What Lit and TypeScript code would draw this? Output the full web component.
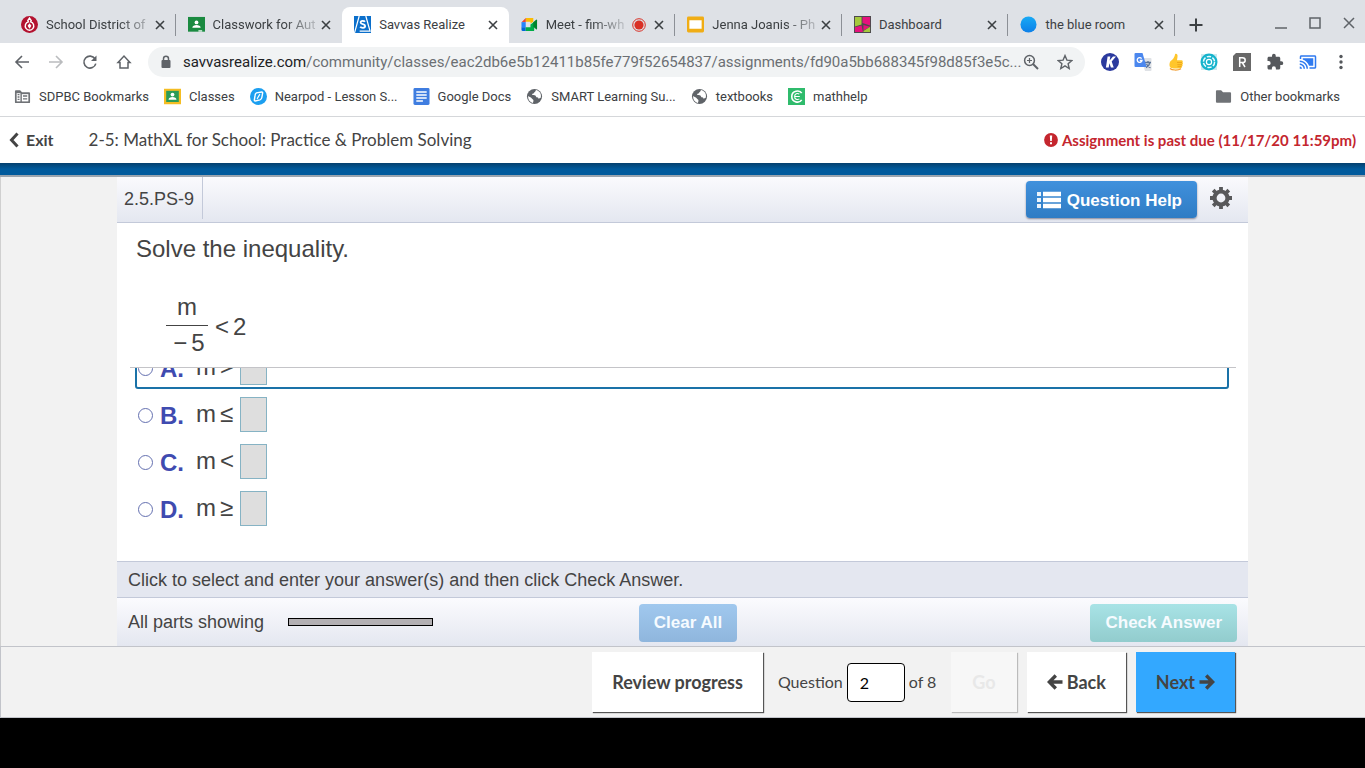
import { LitElement, html, css, svg, nothing } from "lit";
import { customElement, property, state } from "lit/decorators.js";
import { classMap } from "lit/directives/class-map.js";

const glyphs: Record<string, { box: string; body: unknown }> = {
  district: {
    box: "0 0 18 18",
    body: svg`<circle cx="9" cy="9" r="9" fill="#b3122f"/><path d="M9 2.200l1.800 2.600-.6 1.400a4.500 4.500 0 1 1-2.400 0l-.6-1.400z" fill="none" stroke="#fff" stroke-width="1.500"/><path d="M9 7.600l2 2.800-2 3.200-2-3.200z" fill="#fff"/>`,
  },
  classroom: {
    box: "0 0 18 18",
    body: svg`<path d="M0 1h18v15.600H0z" fill="#1a8a40"/><circle cx="9" cy="6.800" r="2" fill="#fff"/><path d="M4.600 12.400c0-2.200 2.200-3 4.400-3s4.400.8 4.400 3z" fill="#fff"/><path d="M11 15h4v1.600h-4z" fill="#d8efe0"/>`,
  },
  savvas: {
    box: "0 0 18 18",
    body: svg`<path d="M0 0h18v18H0z" fill="#0b6fcb"/><path d="M5.500 0L.5 18M12.500 0L17 16H6" fill="none" stroke="#fff" stroke-width="1.300"/><path d="M11.600 6.200C10.800 5 7 4.600 7 6.900c0 2.400 4.800 1.200 4.800 3.800 0 2.500-4.200 2.200-5.200.7" fill="none" stroke="#fff" stroke-width="1.900"/>`,
  },
  meet: {
    box: "0 0 18 18",
    body: svg`<path d="M5 2h8v4l-3 2V6H5z" fill="#fbbc04"/><path d="M5 2v4.500H.5z" fill="#ea4335"/><path d="M.5 6.500H5V12H.5z" fill="#2684fc"/><path d="M.5 12H5v4H2Q.5 16 .5 14.500z" fill="#0066da"/><path d="M5 12h5V9l4-3v9q0 1-1 1H5z" fill="#00ac47"/><path d="M13 6.500l3-2.500q1-.6 1 .6v9q0 1-1 .4l-3-2.500z" fill="#00832d"/>`,
  },
  record: {
    box: "0 0 14 14",
    body: svg`<circle cx="7" cy="7" r="6.300" fill="none" stroke="#d93025" stroke-width="1"/><circle cx="7" cy="7" r="4.600" fill="#d93025"/>`,
  },
  slides: {
    box: "0 0 18 18",
    body: svg`<rect y="0.500" width="18" height="17" rx="1.500" fill="#f0ad15"/><path d="M2.500 4.500h13v9h-13z" fill="#fff"/>`,
  },
  dashboard: {
    box: "0 0 18 18",
    body: svg`<path d="M0 0h18v18H0z" fill="#4c4a4d"/><path d="M1 1h7v8L1 11z" fill="#a5c83c"/><path d="M9 1h8v9L9 7.500z" fill="#e5127d"/><path d="M1 12l7-2 1.500 7H1z" fill="#e5127d"/><path d="M10 9.500l7 1.800-7 4z" fill="#e5127d"/><path d="M10 16l7-4.500V17h-7z" fill="#a5c83c"/>`,
  },
  blue: {
    box: "0 0 18 18",
    body: svg`<defs><linearGradient id="sky" x2="0" y2="1"><stop stop-color="#19aaf5"/><stop offset="1" stop-color="#0c7fe8"/></linearGradient></defs><circle cx="9" cy="9" r="8.500" fill="url(#sky)"/>`,
  },
  close: { box: "0 0 10 10", body: svg`<path d="M1 1l8 8M9 1L1 9" stroke="#3c4043" stroke-width="1.600"/>` },
  plus: { box: "0 0 14 14", body: svg`<path d="M7 .5v13M.5 7h13" stroke="#3c4043" stroke-width="2"/>` },
  minimize: { box: "0 0 12 12", body: svg`<path d="M0 11h12" stroke="#5f6368" stroke-width="1.500"/>` },
  maximize: { box: "0 0 12 12", body: svg`<path d="M1 1h10v10H1z" fill="none" stroke="#5f6368" stroke-width="1.500"/>` },
  shut: { box: "0 0 12 12", body: svg`<path d="M1 1l10 10M11 1L1 11" stroke="#5f6368" stroke-width="1.500"/>` },
  back: { box: "0 0 16 16", body: svg`<path d="M15 8H2M8 2L2 8l6 6" fill="none" stroke="#5f6368" stroke-width="1.600"/>` },
  forward: { box: "0 0 16 16", body: svg`<path d="M1 8h13M8 2l6 6-6 6" fill="none" stroke="#babcbe" stroke-width="1.600"/>` },
  reload: { box: "0 0 16 16", body: svg`<path d="M13 4.800A6 6 0 1 0 13.800 9.600" fill="none" stroke="#5f6368" stroke-width="1.600"/><path d="M14.500 1.500V7H9z" fill="#5f6368"/>` },
  home: { box: "0 0 16 16", body: svg`<path d="M2 8.500L8 2l6 6.500h-2V14H4V8.500z" fill="none" stroke="#5f6368" stroke-width="1.500"/>` },
  lock: { box: "0 0 12 14", body: svg`<rect x="1.500" y="5" width="9" height="8" rx="1" fill="#5f6368"/><path d="M3.500 6V3.800a2.500 2.500 0 0 1 5 0V6" fill="none" stroke="#5f6368" stroke-width="1.500"/>` },
  zoomIn: { box: "0 0 16 16", body: svg`<circle cx="6.500" cy="6.500" r="4.900" fill="none" stroke="#5f6368" stroke-width="1.500"/><path d="M10 10l5 5" stroke="#5f6368" stroke-width="1.900"/><path d="M6.500 4v5M4 6.500h5" stroke="#5f6368" stroke-width="1.200"/>` },
  star: { box: "0 0 16 16", body: svg`<path d="M8 1.600l1.900 4.500 4.900.4-3.700 3.200 1.100 4.800L8 11.900l-4.200 2.600 1.100-4.800L1.200 6.500l4.900-.4z" fill="none" stroke="#5f6368" stroke-width="1.400"/>` },
  kami: { box: "0 0 18 18", body: svg`<circle cx="9" cy="9" r="9" fill="#2b3a9e"/><path d="M6.600 3.500h2.700l-.7 4L12 3.500h3L10.700 8.600l2 5.900H9.900L8.400 10.300l-.7 4.200H4.900z" fill="#fff"/>` },
  translate: { box: "0 0 18 18", body: svg`<path d="M7 5h9.500q1 0 1 1v11q0 1-1 1H11z" fill="#dfe2e6"/><path d="M10.500 9.500h6.500M14 8v1.500M16 9.500c-.6 2.500-2.500 4.500-4 5.200M12.500 11c1 2 2.500 3.200 4 3.700" fill="none" stroke="#5b7396" stroke-width="1.300"/><path d="M1.500 0H8.500l4.200 14H1.500Q.5 14 .5 13V1q0-1 1-1z" fill="#4b87ee"/><path d="M7.600 5.600A2.400 2.400 0 1 0 8 7.500H5.800" fill="none" stroke="#fff" stroke-width="1.300"/>` },
  thumb: { box: "0 0 18 18", body: svg`<path d="M8.200 1c1.800-.6 2.700 1 2.300 2.900L10 7.200h4.500c1.500 0 1.600 1.700.9 2.100.9.600.7 1.900-.1 2.200.6.800.200 1.800-.6 2 .4 1-.3 1.900-1.300 1.900H8c-1.700 0-3.400-.3-4.600-1-1.400-1.500-1-5.400.3-6.500C6 6.800 7.500 4 8.200 1z" fill="#ffc62b"/><path d="M10 9.500h5M10.300 11.700h4.700M10.500 13.600h4" stroke="#e79a14" stroke-width=".7"/><path d="M3 15.500c2 2 8 2 11 .2" stroke="#f19a2a" fill="none" stroke-width="1.200"/>` },
  wheel: { box: "0 0 18 18", body: svg`<path d="M1 1h16v16H1z" fill="#cde9ee"/><circle cx="9" cy="9" r="8.500" fill="#15b3cc"/><circle cx="9" cy="9" r="5.600" fill="none" stroke="#e8fbff" stroke-width="1.500" stroke-dasharray="4.400 1.460"/><circle cx="9" cy="9" r="2.600" fill="none" stroke="#fff" stroke-width="1.200"/>` },
  rbox: { box: "0 0 18 18", body: svg`<path d="M3 0h15v18H0V3z" fill="#686868"/><path d="M6.700 14V4.700h2.800c3.600 0 3.600 4.900 0 4.900H6.700M9.300 9.600L12 14" fill="none" stroke="#fff" stroke-width="1.500"/>` },
  puzzle: { box: "0 0 24 24", body: svg`<path d="M20.500 11H19V7c0-1.100-.9-2-2-2h-4V3.500a2.500 2.500 0 0 0-5 0V5H4c-1.100 0-2 .9-2 2v3.800h1.500a2.700 2.700 0 0 1 0 5.400H2V20c0 1.100.9 2 2 2h3.800v-1.500a2.700 2.700 0 0 1 5.400 0V22H17c1.100 0 2-.9 2-2v-4h1.500a2.500 2.500 0 0 0 0-5z" fill="#55585c"/>` },
  cast: { box: "0 0 24 24", body: svg`<path d="M1 18v3h3c0-1.660-1.340-3-3-3zm0-4v2c2.760 0 5 2.240 5 5h2c0-3.870-3.130-7-7-7zm0-4v2c4.970 0 9 4.030 9 9h2c0-6.080-4.930-11-11-11zM21 3H3c-1.100 0-2 .9-2 2v3h2V5h18v14h-7v2h7c1.100 0 2-.9 2-2V5c0-1.100-.9-2-2-2z" fill="#2f7af0"/><path d="M5 7v1.600c4 1.300 7.100 4.400 8.400 8.400H19V7z" fill="#2f7af0"/>` },
  dots: { box: "0 0 18 18", body: svg`<circle cx="9" cy="3.500" r="1.700" fill="#55585c"/><circle cx="9" cy="9" r="1.700" fill="#55585c"/><circle cx="9" cy="14.500" r="1.700" fill="#55585c"/>` },
  managed: { box: "0 0 18 18", body: svg`<path d="M1 3.500q0-1 1-1h4.500l2 2H16q1 0 1 1V15q0 1-1 1H2q-1 0-1-1z" fill="#6f7276"/><path d="M2.800 5.500h4v8.700h-4z" fill="#fff"/><path d="M8.300 6.500h6.900v7.700H8.300z" fill="#fff"/><path d="M3.800 7h2M3.800 9.500h2M3.800 12h2M9.500 8.500h4.500M9.500 11.500h4.500" stroke="#6f7276" stroke-width="1.400"/>` },
  classes: { box: "0 0 18 18", body: svg`<path d="M0 .8h18v16.400H0z" fill="#f4bd23"/><path d="M2.300 3h13.400v11.800H2.300z" fill="#2b9b57"/><circle cx="9" cy="7" r="2" fill="#fff"/><path d="M4.800 12.500c0-2 2-3 4.200-3s4.200 1 4.200 3z" fill="#fff"/>` },
  nearpod: { box: "0 0 18 18", body: svg`<circle cx="9" cy="9" r="9" fill="#1c9ff0"/><path d="M6.800 5.200l5.700-.9q1-.1.900.8l-.8 4.700q-.3 2.300-2 2.800l-5 1.100q-1.100.1-1-.9l.7-4.700q.2-2.300 1.500-2.900z" fill="none" stroke="#fff" stroke-width="1.500"/><path d="M7.500 11.500l3-5" stroke="#fff" stroke-width="1.200"/>` },
  docs: { box: "0 0 18 18", body: svg`<rect y="0" x=".5" width="17" height="18" rx="1.500" fill="#3f7de0"/><path d="M3.500 4.200h11M3.500 7.400h11M3.500 10.600h11M3.500 13.800h7" stroke="#fff" stroke-width="1.700"/>` },
  globe: { box: "0 0 18 18", body: svg`<circle cx="9" cy="9" r="8" fill="#5f6368"/><path d="M10.800 2.200c-1 .8-.6 1.800-1.900 2.300-.6 1.900-2.600 1-2.300 2.900 2 .2 3.400-.3 4 1.500.6 1.400 2.600.3 2.700 2.400l2.300-1c1-3.500-.8-7-4.800-8.100zM2.300 8.600c1.600 1.500 3.300 1 3.900 2.600.5 1 2 1 1.700 2.600l-.6 2C4 15 2 12.300 2.300 8.600z" fill="#fff"/>` },
  mathhelp: { box: "0 0 18 18", body: svg`<path d="M0 0h18v18H0z" fill="#2fbb6c"/><path d="M14.500 5.500C12.500 1.800 4 2.500 4 9s8 7.500 10.500 3.500" fill="none" stroke="#fff" stroke-width="1.700"/><path d="M12 6.500C10 5 7 6 7 9s3 4 5 2.500M7.500 9h5" fill="none" stroke="#fff" stroke-width="1.200"/>` },
  folder: { box: "0 0 18 18", body: svg`<path d="M1 3.500q0-1 1-1h4.500l2 2H16q1 0 1 1v9q0 1-1 1H2q-1 0-1-1z" fill="#6f7276"/>` },
  chevron: { box: "0 0 10 16", body: svg`<path d="M8.500 1.500L2.500 8l6 6.500" fill="none" stroke="#444" stroke-width="3"/>` },
  alert: { box: "0 0 14 14", body: svg`<circle cx="7" cy="7" r="6.900" fill="#c4262e"/><path d="M5.800 2.600h2.400L7.800 8H6.200zM6 9.200h2v2H6z" fill="#fff"/>` },
  list: { box: "0 0 26 18", body: svg`<path d="M7 3h18M7 9h18M7 15h18" stroke="#fff" stroke-width="4.600"/><path d="M1 3h4M1 9h4M1 15h4" stroke="#fff" stroke-width="4" opacity=".9"/>` },
  gear: { box: "0 0 24 24", body: svg`<circle cx="12" cy="12" r="6.500" fill="none" stroke="#58585a" stroke-width="4.200"/><path d="M12 1v4M12 19v4M1 12h4M19 12h4M4.200 4.200l2.800 2.800M17 17l2.800 2.800M4.200 19.800l2.800-2.800M17 7l2.800-2.800" stroke="#58585a" stroke-width="3.800"/>` },
  arrowLeft: { box: "0 0 16 16", body: svg`<path d="M15.500 8H3M8.800 1.500L2.300 8l6.500 6.500" fill="none" stroke="#444" stroke-width="3.400"/>` },
  arrowRight: { box: "0 0 16 16", body: svg`<path d="M.5 8H13M7.200 1.500L13.700 8l-6.500 6.500" fill="none" stroke="#444" stroke-width="3.400"/>` },
};

const icon = (name: string, cls = "i18") =>
  svg`<svg class=${"icon " + cls} viewBox=${glyphs[name].box} aria-hidden="true">${glyphs[name].body}</svg>`;

const shared = css`
  *, *::before, *::after { box-sizing: border-box; }
  button, input { font: inherit; color: inherit; margin: 0; }
  button { border: 0; background: none; padding: 0; display: inline-flex; align-items: center; justify-content: center; cursor: pointer; white-space: nowrap; }
  a { color: inherit; text-decoration: none; }
  .icon { display: block; flex: none; }
  .i10 { width: 10px; height: 10px; }
  .i12 { width: 12px; height: 12px; }
  .i14 { width: 14px; height: 14px; }
  .i16 { width: 16px; height: 16px; }
  .i17 { width: 17px; height: 17px; }
  .i18 { width: 18px; height: 18px; }
  .i24 { width: 24px; height: 24px; }
`;

interface Tab { icon: string; title: string; active?: boolean; recording?: boolean }

const tabs: Tab[] = [
  { icon: "district", title: "School District of" },
  { icon: "classroom", title: "Classwork for Aut" },
  { icon: "savvas", title: "Savvas Realize", active: true },
  { icon: "meet", title: "Meet - fim-wh", recording: true },
  { icon: "slides", title: "Jenna Joanis - Ph" },
  { icon: "dashboard", title: "Dashboard" },
  { icon: "blue", title: "the blue room" },
];

const bookmarks = [
  ["managed", "SDPBC Bookmarks"],
  ["classes", "Classes"],
  ["nearpod", "Nearpod - Lesson S..."],
  ["docs", "Google Docs"],
  ["globe", "SMART Learning Su..."],
  ["globe", "textbooks"],
  ["mathhelp", "mathhelp"],
];

const extensions = [
  ["kami", "Kami"], ["translate", "Translate"], ["thumb", "Thumbs up"], ["wheel", "Wheel"],
  ["rbox", "Reader"], ["puzzle", "Extensions"], ["cast", "Cast"], ["dots", "Menu"],
];

@customElement("browser-chrome")
export class BrowserChrome extends LitElement {
  static styles = [shared, css`
    :host { display: block; font: 13px/18px Roboto, sans-serif; color: #3c4043; background: #fff; border-bottom: 1px solid #d5d7da; }
    .strip { display: flex; background: #dee1e6; height: 43px; padding: 7px 0 0 9px; }
    .tabs { display: flex; flex: 1; min-width: 0; }
    .tab { flex: 1 1 0; min-width: 0; display: flex; align-items: center; gap: 8px; padding: 0 10px 1px 12px; border-right: 1px solid #8c9096; border-image: linear-gradient(transparent 20%, #8c9096 20%, #8c9096 80%, transparent 80%) 1; }
    .tab.plain { border-color: transparent; border-image: none; }
    .tab.active { background: #fff; border-radius: 8px 8px 0 0; }
    .title { flex: 1; min-width: 0; overflow: hidden; white-space: nowrap; text-align: left; justify-content: flex-start; }
    .fade { mask-image: linear-gradient(to right, #000 calc(100% - 32px), rgba(0, 0, 0, 0.2)); margin-right: -4px; }
    .recording .fade { margin-right: 0; }
    .window { display: flex; width: 190px; padding: 0 10px 0 14px; justify-content: space-between; }
    .controls { display: flex; gap: 22px; padding-bottom: 5px; }
    .toolbar { display: flex; align-items: center; padding: 4px 15px 0 14px; }
    .nav { display: flex; gap: 18px; padding-right: 16px; }
    .omni { flex: 1; min-width: 0; display: flex; align-items: center; height: 30px; border-radius: 15px; background: #f1f3f4; padding: 0 12px; gap: 18px; }
    .address { flex: 1; min-width: 0; display: flex; align-items: center; gap: 11px; margin-right: -16px; }
    .lock { width: 12px; height: 14px; }
    .url { flex: 1; min-width: 0; overflow: hidden; white-space: nowrap; font-size: 15px; color: #6b6f73; }
    .host { color: #202124; }
    .ext { display: flex; gap: 15px; padding-left: 16px; }
    .ext button { width: 18px; }
    .bookmarks { display: flex; align-items: center; gap: 15px; height: 39px; padding: 0 25px 0 14px; }
    .mark { display: flex; align-items: center; gap: 8px; white-space: nowrap; }
    .other { margin-left: auto; }
  `];

  render() {
    return html`
      <div class="strip">
        <div class="tabs" role="tablist">
          ${tabs.map((t, i) => html`
            <div class=${classMap({ tab: true, active: !!t.active, recording: !!t.recording, plain: !!t.active || !!tabs[i + 1]?.active })}>
              ${icon(t.icon, "i17")}
              <button role="tab" aria-selected=${t.active ? "true" : "false"} class=${classMap({ title: true, fade: !!t.recording || t.title.length > 14 })}>${t.title}</button>
              ${t.recording ? icon("record", "i14") : nothing}
              <button aria-label="Close tab">${icon("close", "i10")}</button>
            </div>`)}
        </div>
        <div class="window">
          <button aria-label="New tab">${icon("plus", "i14")}</button>
          <div class="controls">
            <button aria-label="Minimize">${icon("minimize", "i12")}</button>
            <button aria-label="Maximize">${icon("maximize", "i12")}</button>
            <button aria-label="Close">${icon("shut", "i12")}</button>
          </div>
        </div>
      </div>
      <div class="toolbar">
        <div class="nav">
          <button aria-label="Back">${icon("back", "i16")}</button>
          <button aria-label="Forward">${icon("forward", "i16")}</button>
          <button aria-label="Reload">${icon("reload", "i16")}</button>
          <button aria-label="Home">${icon("home", "i16")}</button>
        </div>
        <div class="omni">
          <div class="address">
            ${icon("lock", "lock")}
            <div class="url"><span class="host">savvasrealize.com</span>/community/classes/eac2db6e5b12411b85fe779f52654837/assignments/fd90a5bb688345f98d85f3e5c...</div>
          </div>
          <button aria-label="Zoom">${icon("zoomIn", "i16")}</button>
          <button aria-label="Bookmark">${icon("star", "i16")}</button>
        </div>
        <div class="ext">${extensions.map(([g, label]) => html`<button aria-label=${label}>${icon(g)}</button>`)}</div>
      </div>
      <nav class="bookmarks">
        ${bookmarks.map(([g, label]) => html`<a class="mark" href="#">${icon(g, "i17")}${label}</a>`)}
        <a class="mark other" href="#">${icon("folder", "i17")}Other bookmarks</a>
      </nav>`;
  }
}

@customElement("exercise-panel")
export class ExercisePanel extends LitElement {
  @state() private focused = "A";

  static styles = [shared, css`
    :host { display: block; background: #fff; font: 18px/24px "Liberation Sans", Arial, sans-serif; color: #444; }
    .head { display: flex; align-items: center; height: 46px; background: linear-gradient(#fafafd, #e4e7f0); border-bottom: 1px solid #c3c9d9; padding-right: 15px; }
    .id { align-self: stretch; display: flex; align-items: center; padding: 2px 8px 0 7px; margin-bottom: 3px; border-right: 1px solid #c3c9d9; }
    .help { margin-left: auto; gap: 5px; height: 37px; padding: 2px 15px 0 10px; border-radius: 4px; background: linear-gradient(#4090dc, #2f7cc4); box-shadow: 0 1px 2px #889; color: #fff; font-size: 17px; font-weight: bold; }
    .list { width: 26px; height: 18px; margin-bottom: 2px; }
    .settings { margin: 0 0 4px 12px; }
    .question { height: 144px; padding: 10px 19px; font-size: 24px; line-height: 32px; }
    .prompt { margin: 0 0 24px; font-weight: normal; font-size: 24px; }
    .math { display: flex; align-items: center; gap: 7px; padding-left: 30px; }
    .frac { display: flex; flex-direction: column; text-align: center; }
    .num { border-bottom: 1px solid #444; padding: 2px 11px; }
    .den { display: flex; justify-content: center; gap: 4px; padding: 1px 0 5px 4px; }
    .rel { display: flex; gap: 4px; }
    .choices { display: flex; flex-direction: column; justify-content: flex-end; gap: 4px; height: 194px; overflow: hidden; border: 0; border-top: 1px solid #c4c4c8; margin: 0 12px 0 13px; padding: 0 7px 31px 5px; min-width: 0; }
    .choice { flex: none; display: flex; align-items: center; height: 43px; border: 2px solid transparent; border-radius: 3px; font-size: 24px; line-height: 32px; }
    .choice.on { border-color: #1a72a8; }
    .choice input[type="radio"] { appearance: none; width: 15px; height: 15px; border: 1px solid #6470b0; border-radius: 50%; background: #fff; margin: 2px 7px 0 1px; }
    .letter { width: 36px; font-weight: bold; color: #3f4bb0; padding-top: 2px; }
    .expr { display: flex; gap: 4px; width: 44px; padding-bottom: 1px; white-space: nowrap; }
    .blank { width: 27px; height: 35px; border: 1px solid #86b3c4; background: #dedede; padding: 0; border-radius: 0; }
    .hint { height: 37px; padding: 0 11px; display: flex; align-items: center; background: #e4e7f0; border-top: 1px solid #c3c9d9; border-bottom: 1px solid #c3c9d9; }
    .actions { display: grid; grid-template-columns: 1fr auto 1fr; align-items: center; height: 48px; padding: 2px 11px 0; background: linear-gradient(#fbfbfe, #e4e7f0); }
    .parts { display: flex; align-items: center; gap: 24px; padding-bottom: 3px; }
    .meter { width: 145px; height: 8px; border: 1px solid #000; background: #b3b0b3; }
    .action { height: 38px; border-radius: 4px; padding: 0 15px; font-size: 17px; font-weight: bold; color: #f6fbff; }
    .clear { background: linear-gradient(#a0c8ee, #8fb6dd); margin-left: 11px; }
    .check { justify-self: end; background: linear-gradient(#a8e3e6, #92cccd); }
  `];

  render() {
    const options = [["A", ">"], ["B", "≤"], ["C", "<"], ["D", "≥"]];
    return html`
      <div class="head">
        <div class="id">2.5.PS-9</div>
        <button class="help">${icon("list", "list")}Question Help</button>
        <button class="settings" aria-label="Settings">${icon("gear", "i24")}</button>
      </div>
      <div class="question">
        <h1 class="prompt">Solve the inequality.</h1>
        <div class="math">
          <div class="frac">
            <span class="num">m</span>
            <span class="den"><span>−</span><span>5</span></span>
          </div>
          <div class="rel"><span>&lt;</span><span>2</span></div>
        </div>
      </div>
      <fieldset class="choices" aria-label="Answer choices">
        ${options.map(([k, op]) => html`
          <div class=${classMap({ choice: true, on: this.focused === k })}>
            <input type="radio" name="answer" id=${"opt" + k} @focus=${() => (this.focused = k)} />
            <label class="letter" for=${"opt" + k}>${k}.</label>
            <span class="expr"><span>m</span><span>${op}</span></span>
            <input class="blank" type="text" aria-label=${"Value for choice " + k} />
          </div>`)}
      </fieldset>
      <div class="hint">Click to select and enter your answer(s) and then click Check Answer.</div>
      <div class="actions">
        <div class="parts"><span>All parts showing</span><div class="meter"></div></div>
        <button class="action clear">Clear All</button>
        <button class="action check">Check Answer</button>
      </div>`;
  }
}

@customElement("app-root")
export class AppRoot extends LitElement {
  @property({ type: Number }) question = 2;

  static styles = [shared, css`
    :host { display: flex; flex-direction: column; min-height: 100vh; background: #000; font: 16px/24px Lato, sans-serif; color: #444; }
    .bar { display: flex; align-items: center; height: 46px; padding: 0 9px; background: #fff; }
    .exit { display: flex; align-items: center; gap: 7px; font-weight: bold; }
    .chev { width: 10px; height: 16px; }
    .name { margin: 0 0 0 35px; font-size: 17px; font-weight: normal; }
    .due { margin-left: auto; display: flex; align-items: center; gap: 4px; color: #c4262e; font-size: 15px; font-weight: bold; }
    .band { height: 14px; background: linear-gradient(#04406e, #005a9c 50%, #005a9c); border-bottom: 2px solid #9aa4ae; }
    .stage { background: #f2f2f2; padding: 0 117px 0 116px; border-left: 1px solid #d0d0d0; }
    .foot { display: flex; justify-content: flex-end; align-items: center; background: #f2f2f2; border: 1px solid #c2c4ca; border-right: 0; height: 72px; padding-right: 130px; }
    .btn { height: 60px; background: #fff; font-size: 18px; font-weight: bold; padding: 0 20px; box-shadow: 1px 1px 1px #555; gap: 4px; }
    .go { color: #e8e8e8; background: #f7f7f7; box-shadow: 1px 1px 1px #bbb; padding: 0 21px; margin: 0 10px 0 15px; }
    .next { background: #33a8ff; margin-left: 10px; }
    .pick { display: flex; align-items: center; gap: 4px; margin-left: 15px; }
    .num { width: 58px; height: 39px; border: 1px solid #000; border-radius: 4px; background: #fff; color: #000; padding: 0 12px; }
  `];

  render() {
    return html`
      <browser-chrome></browser-chrome>
      <header class="bar">
        <a class="exit" href="#">${icon("chevron", "chev")}Exit</a>
        <h2 class="name">2-5: MathXL for School: Practice &amp; Problem Solving</h2>
        <div class="due">${icon("alert", "i14")}Assignment is past due (11/17/20 11:59pm)</div>
      </header>
      <div class="band"></div>
      <main class="stage"><exercise-panel></exercise-panel></main>
      <footer class="foot">
        <button class="btn">Review progress</button>
        <div class="pick">
          <label for="number">Question</label>
          <input class="num" id="number" type="text" .value=${String(this.question)} />
          <span>of 8</span>
        </div>
        <button class="btn go" disabled>Go</button>
        <button class="btn">${icon("arrowLeft", "i16")}Back</button>
        <button class="btn next">Next${icon("arrowRight", "i16")}</button>
      </footer>`;
  }
}
